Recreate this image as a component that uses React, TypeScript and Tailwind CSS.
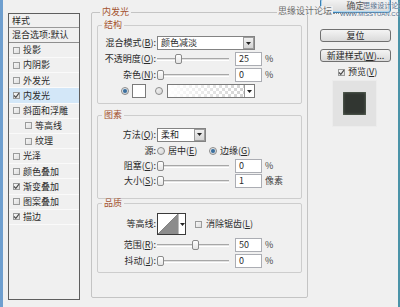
import React from "react";

const font = "font-['Noto_Sans_CJK_SC','Noto_Sans',sans-serif]";

function Check({ checked = false }: { checked?: boolean }) {
  return (
    <div className="w-[7px] h-[7px] shrink-0 border border-[#9a9b9b] bg-gradient-to-br from-[#f6f6f6] to-[#dedede] flex items-center justify-center">
      {checked && (
        <svg width="7" height="7" viewBox="0 0 7 7" className="shrink-0">
          <path d="M1 3.5 L2.8 5.3 L6 1.2" fill="none" stroke="#4a4a4a" strokeWidth="1.1" />
        </svg>
      )}
    </div>
  );
}

function Radio({ on = false }: { on?: boolean }) {
  return (
    <div className="w-[8px] h-[8px] shrink-0 rounded-full border border-[#8a8a8a] bg-gradient-to-br from-[#f4f4f4] to-[#d6d6d6] flex items-center justify-center">
      {on && <div className="w-[4px] h-[4px] rounded-full bg-[#3d6f9c] shadow-[0_0_1px_#9cc3e6]" />}
    </div>
  );
}

function Arrow() {
  return (
    <svg width="5" height="3" viewBox="0 0 5 3">
      <path d="M0 0 H5 L2.5 3 Z" fill="#222" />
    </svg>
  );
}

function Select({ w, text }: { w: string; text: string }) {
  return (
    <div className={`${w} h-[14px] border border-[#838383] bg-white flex items-stretch`}>
      <span className="flex-1 pl-[3px] leading-[12px]">{text}</span>
      <div className="w-[11px] border border-[#9c9c9c] bg-gradient-to-b from-[#f0f0f0] to-[#d4d4d4] flex items-center justify-center">
        <Arrow />
      </div>
    </div>
  );
}

function Slider({ thumb }: { thumb: string }) {
  return (
    <div className="relative w-[72px] h-[10px] flex items-center">
      <div className="w-full h-[3px] border-t border-t-[#a7a7a7] border-b border-b-white bg-[#e2e2e2]" />
      <div className={`absolute top-[0px] ${thumb} w-[7px] h-[10px] rounded-[2px] border border-[#8a8a8a] bg-gradient-to-b from-white to-[#e4e4e4]`} />
    </div>
  );
}

function NumRow({ label, thumb, value, unit }: { label: React.ReactNode; thumb: string; value: string; unit: string }) {
  return (
    <div className="flex items-center h-[14px]">
      <div className="w-[58px] text-right">{label}</div>
      <div className="ml-[1px]">
        <Slider thumb={thumb} />
      </div>
      <div className="ml-[6px] w-[27px] h-[14px] border border-[#abadb3] bg-white pl-[3px] leading-[12px]">{value}</div>
      <span className="ml-[3px] text-[#444]">{unit}</span>
    </div>
  );
}

function Group({ title, className, children }: { title: string; className: string; children?: React.ReactNode }) {
  return (
    <fieldset className={`border border-[#cdcdcd] rounded-[2px] ${className}`}>
      <legend className="ml-[4px] px-[2px] leading-[10px] text-[#a4532f]">{title}</legend>
      {children}
    </fieldset>
  );
}

function ListRow({ text, checked = false, sub = false, sel = false }: { text: string; checked?: boolean; sub?: boolean; sel?: boolean }) {
  return (
    <div
      className={`h-[15.17px] border-b border-b-[#fafafa] flex items-center gap-[3px] ${sub ? "pl-[16px]" : "pl-[4px]"} ${
        sel ? "bg-[#d3e7f8]" : ""
      }`}
    >
      <Check checked={checked} />
      <span>{text}</span>
    </div>
  );
}

function Btn({ children, className }: { children: React.ReactNode; className: string }) {
  return (
    <div
      className={`w-[71px] rounded-[3px] border bg-gradient-to-b from-[#f4f4f4] to-[#dadada] flex items-center justify-center leading-none ${className}`}
    >
      {children}
    </div>
  );
}

export default function App() {
  return (
    <div className={`relative w-[400px] h-[307px] overflow-hidden bg-[#f0f0f0] flex text-[9px] text-[#2a2a2a] ${font}`}>
      <div className="w-[3px] h-full bg-[#6f9fcf]" />

      {/* left list */}
      <div className="ml-[5px] mt-[13px] w-[72px] h-[287px] border border-[#5e5e5e] bg-[#f0f0f0] flex flex-col">
        <div className="h-[14px] pl-[3px] border-b border-b-[#9a9a9a] flex items-center">样式</div>
        <div className="h-[15px] pl-[3px] border-b border-b-[#8f8f8f] flex items-center">混合选项:默认</div>
        <ListRow text="投影" />
        <ListRow text="内阴影" />
        <ListRow text="外发光" />
        <ListRow text="内发光" checked sel />
        <ListRow text="斜面和浮雕" />
        <ListRow text="等高线" sub />
        <ListRow text="纹理" sub />
        <ListRow text="光泽" />
        <ListRow text="颜色叠加" />
        <ListRow text="渐变叠加" checked />
        <ListRow text="图案叠加" />
        <ListRow text="描边" checked />
      </div>

      {/* main group */}
      <fieldset className="ml-[11px] mt-[7px] w-[217px] h-[291px] border border-[#c4c4c4] rounded-[2px] px-[5px]">
        <legend className="ml-[3px] px-[2px] leading-[10px] text-[#a4532f]">内发光</legend>

        <Group title="结构" className="mt-[3px] h-[84px]">
          <div className="pt-[6px] flex flex-col gap-[2px]">
            <div className="flex items-center h-[14px]">
              <div className="w-[58px] text-right">
                混合模式(<u>B</u>):
              </div>
              <div className="ml-[1px]">
                <Select w="w-[98px]" text="颜色减淡" />
              </div>
            </div>
            <NumRow label={<>不透明度(<u>O</u>):</>} thumb="left-[18px]" value="25" unit="%" />
            <NumRow label={<>杂色(<u>N</u>):</>} thumb="left-[0px]" value="0" unit="%" />
            <div className="flex items-center h-[14px] pl-[23px]">
              <Radio on />
              <div className="ml-[3px] w-[14px] h-[14px] border border-[#7a7a7a] bg-white" />
              <div className="ml-[9px]">
                <Radio />
              </div>
              <div className="ml-[4px] w-[88px] h-[14px] border border-[#7a7a7a] flex items-stretch">
                <div className="flex-1 [background:linear-gradient(to_right,#ffffff,rgba(255,255,255,0)),repeating-conic-gradient(#d2d2d2_0_25%,#ffffff_0_50%)_0_0/6px_6px]" />
                <div className="w-[10px] bg-white border-l border-l-[#9c9c9c] flex items-center justify-center">
                  <Arrow />
                </div>
              </div>
            </div>
          </div>
        </Group>

        <Group title="图素" className="mt-[6px] h-[89px]">
          <div className="pt-[7px] flex flex-col gap-[1px]">
            <div className="flex items-center h-[15px]">
              <div className="w-[58px] text-right">
                方法(<u>Q</u>):
              </div>
              <div className="ml-[1px]">
                <Select w="w-[49px]" text="柔和" />
              </div>
            </div>
            <div className="flex items-center h-[15px]">
              <div className="w-[58px] text-right">源:</div>
              <div className="ml-[1px] w-[52px] flex items-center">
                <Radio />
                <span className="ml-[3px]">
                  居中(<u>E</u>)
                </span>
              </div>
              <Radio on />
              <span className="ml-[3px]">
                边缘(<u>G</u>)
              </span>
            </div>
            <NumRow label={<>阻塞(<u>C</u>):</>} thumb="left-[0px]" value="0" unit="%" />
            <NumRow label={<>大小(<u>S</u>):</>} thumb="left-[0px]" value="1" unit="像素" />
          </div>
        </Group>

        <Group title="品质" className="mt-[-1px] h-[75px]">
          <div className="pt-[5px] flex flex-col">
            <div className="flex items-center h-[22px]">
              <div className="w-[58px] text-right">等高线:</div>
              <div className="ml-[1px] w-[29px] h-[22px] border border-[#3a3a3a] bg-white flex items-stretch">
                <svg width="20" height="20" viewBox="0 0 20 20" className="shrink-0">
                  <rect x="0" y="0" width="20" height="20" fill="#fff" />
                  <path d="M0 20 L20 0 L20 20 Z" fill="#8c8c8c" />
                  <path d="M0 20 L20 0" stroke="#555" strokeWidth="0.6" />
                </svg>
                <div className="flex-1 border-l border-l-[#bdbdbd] flex items-center justify-center">
                  <Arrow />
                </div>
              </div>
              <div className="ml-[9px]">
                <Check />
              </div>
              <span className="ml-[4px]">
                消除锯齿(<u>L</u>)
              </span>
            </div>
            <div className="mt-[3px] flex flex-col gap-[2px]">
              <NumRow label={<>范围(<u>R</u>):</>} thumb="left-[35px]" value="50" unit="%" />
              <NumRow label={<>抖动(<u>J</u>):</>} thumb="left-[0px]" value="0" unit="%" />
            </div>
          </div>
        </Group>
      </fieldset>

      {/* right column */}
      <div className="ml-[12px] w-[71px] flex flex-col">
        <Btn className="mt-[-2px] h-[15px] border-[#3c7fb1] shadow-[inset_0_0_0_1px_#a8d4f0] text-[#555]">确定</Btn>
        <Btn className="mt-[16px] h-[13px] border-[#707070]">复位</Btn>
        <Btn className="mt-[7px] h-[13px] border-[#707070]">
          新建样式(<u>W</u>)...
        </Btn>
        <div className="mt-[6px] h-[8px] pl-[18px] flex items-center gap-[3px]">
          <Check checked />
          <span>
            预览(<u>V</u>)
          </span>
        </div>
        <div className="mt-[4px] ml-[12px] w-[45px] h-[47px] bg-[#e2e2e2] border border-[#ececec] flex items-center justify-center">
          <div className="w-[23px] h-[23px] bg-[#313631] shadow-[inset_0_0_3px_#6f7d6c]" />
        </div>
      </div>

      <div className="ml-auto w-[2px] h-full bg-[#4b93a8]" />

      {/* watermark */}
      <div className="absolute left-[277px] top-[6px] flex items-center text-[#6d6d6d] text-[9px] leading-none">
        <span className="bg-[#f0f0f0] px-[1px]">思缘设计论坛</span>
        <span className="w-[22px] border-b border-dotted border-[#8a8a8a] mt-[6px]" />
      </div>
      <div className="absolute left-[340px] top-[1px] flex flex-col items-end text-[#4e6a88] text-[7px] leading-[9px] [text-shadow:0_0_2px_#fff]">
        <span className="whitespace-nowrap">思缘设计论坛</span>
        <span className="whitespace-nowrap font-['Liberation_Sans',sans-serif] text-[6px]">WWW.MISSYUAN.COM</span>
      </div>
    </div>
  );
}
